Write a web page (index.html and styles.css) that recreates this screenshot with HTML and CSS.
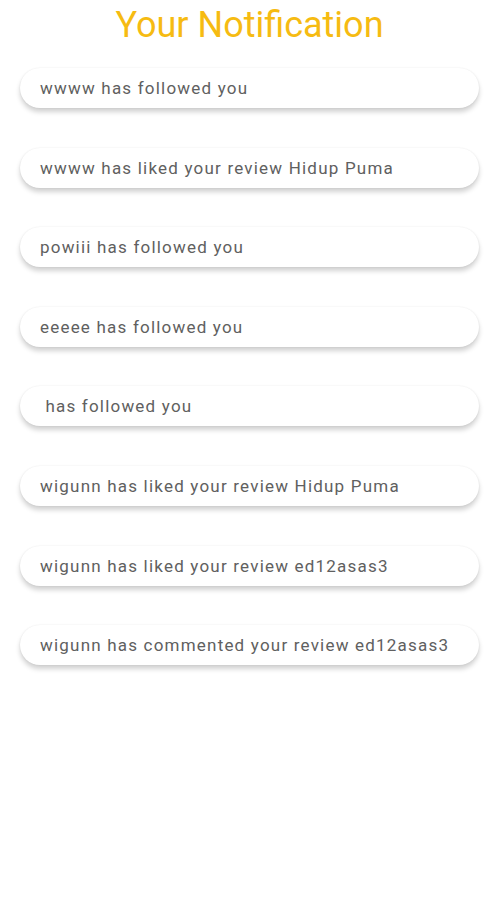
FILE: index.html
```html
<!DOCTYPE html>
<html lang="en">
<head>
  <meta charset="UTF-8">
  <meta name="viewport" content="width=device-width, initial-scale=1.0">
  <title>Your Notification</title>
  <link rel="stylesheet" href="styles.css">
</head>
<body>
  <div class="screen">
    <h1 class="title">Your Notification</h1>
    <ul class="list">
      <li class="card">wwww has followed you</li>
      <li class="card">wwww has liked your review Hidup Puma</li>
      <li class="card">powiii has followed you</li>
      <li class="card">eeeee has followed you</li>
      <li class="card">&nbsp;has followed you</li>
      <li class="card">wigunn has liked your review Hidup Puma</li>
      <li class="card">wigunn has liked your review ed12asas3</li>
      <li class="card">wigunn has commented your review ed12asas3</li>
    </ul>
  </div>
</body>
</html>
```

FILE: styles.css
```css
body {
  margin: 0;
  background-color: #ffffff;
  font-family: Roboto, 'Noto Sans', sans-serif;
}
.screen {
  padding: 0 18px 40px 20px;
}
.title {
  margin: 0;
  padding-top: 3px;
  text-align: center;
  color: #f6bb12; /* amber title */
  font-size: 36px;
  font-weight: 400;
  line-height: 44px;
}
.list {
  list-style: none;
  margin: 0;
  padding: 0;
  padding-top: 21px;
  display: flex;
  flex-direction: column;
  gap: 39.6px;
}
.card {
  height: 40px;
  display: flex;
  align-items: center;
  padding-left: 20px;
  border-radius: 20px;
  background-color: #ffffff;
  color: #606060;
  font-size: 17px;
  letter-spacing: 1.2px;
  box-shadow: 0 4px 5px rgba(0, 0, 0, 0.18), 0 0 2px rgba(0, 0, 0, 0.08);
}
```
